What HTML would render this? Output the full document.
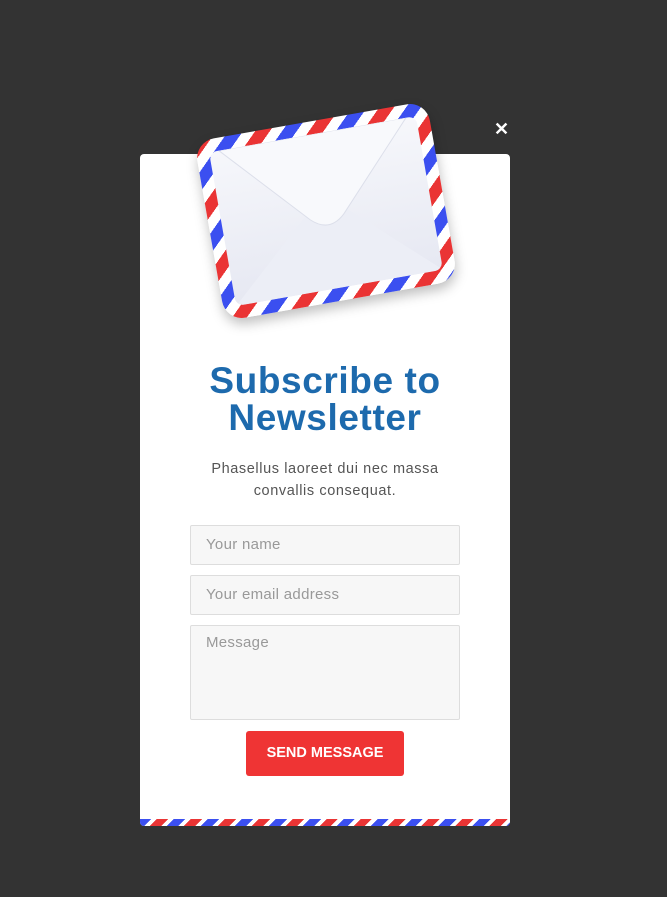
<!DOCTYPE html>
<html><head><style>
body{margin:0;width:667px;height:897px;background:#333;position:relative;overflow:hidden;font-family:"Liberation Sans",sans-serif}
.card{position:absolute;left:140px;top:154px;width:370px;height:672px;background:#fff;border-radius:4px;overflow:hidden}
.stripe{position:absolute;left:0;bottom:0;width:100%;height:7px;background:repeating-linear-gradient(135deg,#3b4ff0 0 8px,#fff 8px 12px,#ea3434 12px 20px,#fff 20px 24px)}
.env{position:absolute;left:208px;top:120px;width:236px;height:182px;transform:rotate(-10deg);border-radius:20px;background:repeating-linear-gradient(135deg,#ea3434 0 12px,#fff 12px 22px,#3b4ff0 22px 34px,#fff 34px 44px);box-shadow:0 6px 12px rgba(0,0,0,.25)}
.inner{position:absolute;inset:13px;border-radius:8px;background:linear-gradient(#f6f7fb,#e6e8f2);overflow:hidden}
.close{position:absolute;left:494px;top:119px;color:#fff;font-size:18px;font-weight:bold}
h1{position:absolute;top:208px;left:0;width:100%;margin:0;text-align:center;color:#1d6aad;font-size:37px;letter-spacing:0.6px;line-height:37px;font-weight:bold}
p{position:absolute;top:304px;left:0;width:100%;margin:0;text-align:center;color:#555;font-size:14.5px;letter-spacing:0.6px;line-height:22px}
.in{position:absolute;left:50px;width:270px;height:38px;border:1px solid #ddd;background:#f7f7f7;border-radius:2px;color:#999;font-size:15px;letter-spacing:0.3px;box-sizing:border-box;padding:10px 15px}
.btn{position:absolute;left:106px;top:577px;width:158px;height:45px;background:#ef3434;border-radius:3px;color:#fff;font-weight:bold;font-size:14.5px;text-align:center;line-height:45px}
</style></head><body>
<div class="card">
<h1>Subscribe to<br>Newsletter</h1>
<p>Phasellus laoreet dui nec massa<br>convallis consequat.</p>
<div class="in" style="top:371px;height:40px">Your name</div>
<div class="in" style="top:421px;height:40px">Your email address</div>
<div class="in" style="top:471px;height:95px;padding-top:8px">Message</div>
<div class="btn">SEND MESSAGE</div>
<div class="stripe"></div>
</div>
<div class="env"><div class="inner">
<svg width="210" height="156" viewBox="0 0 210 156">
<path d="M0 156 L88 76 Q105 64 122 76 L210 156Z" fill="#eceef6"/>
<path d="M10 0 L88 84 Q105 100 122 84 L200 0Z" fill="#f8f9fc" stroke="#dcdfea" stroke-width="1"/>
</svg></div></div>
<div class="close">✕</div>
</body></html>
